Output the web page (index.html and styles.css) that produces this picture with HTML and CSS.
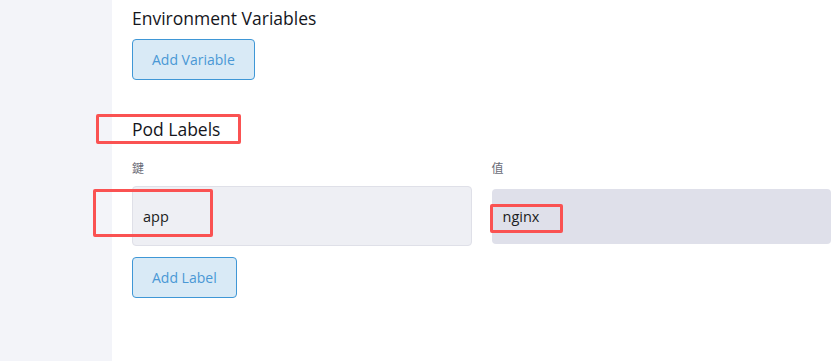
FILE: index.html
```html
<!DOCTYPE html>
<html>
<head>
<meta charset="utf-8">
<link rel="stylesheet" href="styles.css">
</head>
<body>
<div class="layout">
  <aside class="sidebar"></aside>
  <main class="main">
    <section class="section">
      <h3 class="title">Environment Variables</h3>
      <button class="btn">Add Variable</button>
    </section>
    <section class="section labels">
      <h3 class="title title-pod">Pod Labels</h3>
      <div class="kv">
        <div class="field">
          <div class="field-label">鍵</div>
          <div class="input input-key"><span class="val">app</span></div>
        </div>
        <div class="field">
          <div class="field-label">值</div>
          <div class="input input-value"><span class="val">nginx</span></div>
        </div>
      </div>
      <button class="btn btn-label">Add Label</button>
    </section>
  </main>
</div>
<div class="mark mark-title"></div>
<div class="mark mark-key"></div>
<div class="mark mark-value"></div>
</body>
</html>
```
FILE: styles.css
```css
html, body {
  margin: 0;
  padding: 0;
  background: #ffffff;
  font-family: "Open Sans", "Noto Sans", "Noto Sans CJK SC", sans-serif;
  color: #1b1c22;
}
.layout {
  display: flex;
  height: 361px;
  overflow: hidden;
}
.sidebar {
  width: 112px;
  flex: none;
  background: #f3f4f9;
}
.main {
  flex: 1;
  padding: 5px 9px 0 20px;
}
.title {
  margin: 0;
  font-size: 17.5px;
  font-weight: 400;
  line-height: 26px;
  color: #15161c;
}
.btn {
  display: block;
  margin-top: 8px;
  height: 41px;
  padding: 0 19px 1px;
  font-family: inherit;
  font-size: 14px;
  color: #4a98d5;
  background: #d9eaf6;
  border: 1px solid #3f97d6;
  border-radius: 4px;
}
.section + .section {
  margin-top: 36px;
}
.kv {
  display: grid;
  grid-template-columns: 1fr 1fr;
  column-gap: 20px;
  margin-top: 18px;
}
.field-label {
  font-size: 12px;
  line-height: 16px;
  color: #6b6d78;
  font-family: "Noto Sans CJK TC", "Noto Sans CJK SC", sans-serif;
}
.input {
  margin-top: 10px;
  height: 60px;
  box-sizing: border-box;
  display: flex;
  align-items: center;
  padding: 0 10px;
  border-radius: 4px;
  font-size: 14.5px;
}
.input-key {
  background: #eeeff4;
  border: 1px solid #dfe0e8;
}
.input-value {
  background: #dfe0ea;
  height: 55px;
  margin-top: 13px;
  padding: 0 11px;
}
.btn-label {
  margin-top: 11px;
}
.mark {
  position: absolute;
  border: 3px solid #fa5252;
  border-radius: 2px;
  box-sizing: border-box;
}
.mark-title { left: 96px; top: 114px; width: 145px; height: 30px; }
.mark-key { left: 93px; top: 189px; width: 120px; height: 48px; }
.mark-value { left: 490px; top: 204px; width: 73px; height: 29px; }
```
